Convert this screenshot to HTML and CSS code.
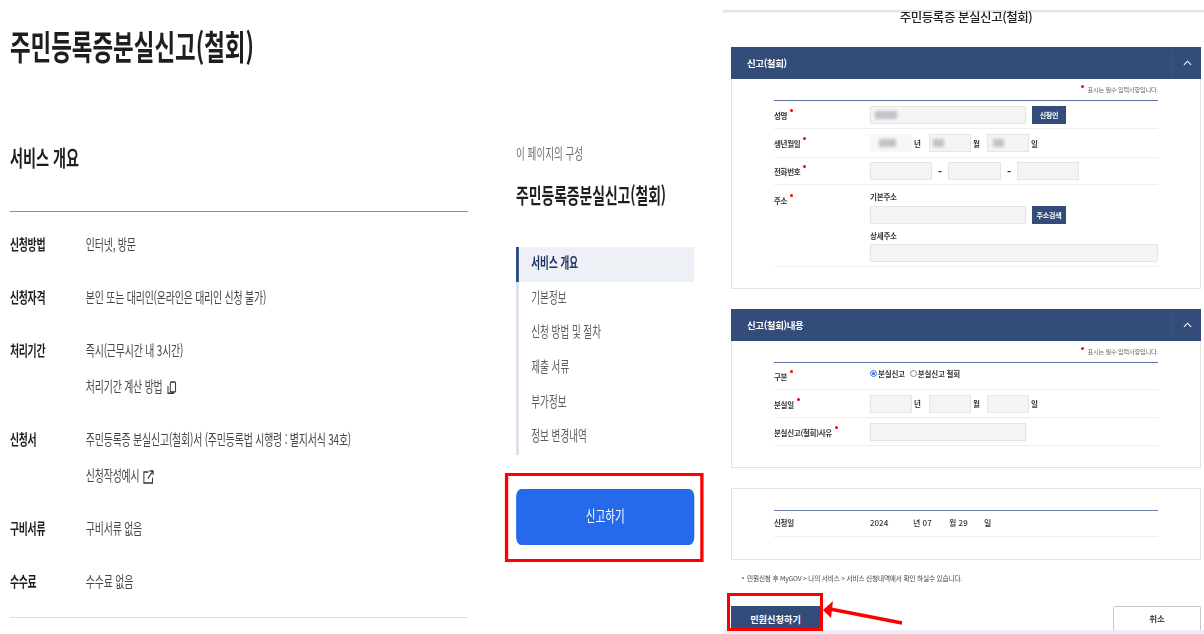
FILE: index.html
```html
<!DOCTYPE html>
<html lang="ko">
<head>
<meta charset="utf-8">
<title>주민등록증분실신고(철회)</title>
<link rel="stylesheet" href="styles.css">
</head>
<body>
<div class="page">
  <div class="info-frame">
    <div class="info">
      <main class="overview">
        <h1>주민등록증분실신고(철회)</h1>
        <h2>서비스 개요</h2>
        <dl class="facts">
          <div class="fact"><dt>신청방법</dt><dd><p>인터넷, 방문</p></dd></div>
          <div class="fact"><dt>신청자격</dt><dd><p>본인 또는 대리인(온라인은 대리인 신청 불가)</p></dd></div>
          <div class="fact"><dt>처리기간</dt><dd><p>즉시(근무시간 내 3시간)</p>
            <p>처리기간 계산 방법
              <svg class="icon" viewBox="0 0 18 14" width="18" height="14" fill="none" stroke="#333" stroke-width="1.5"><rect x="7" y="1" width="8" height="10" rx="1.5"/><path d="M3.5 5v7.2h9"/></svg>
            </p></dd></div>
          <div class="fact"><dt>신청서</dt><dd><p>주민등록증 분실신고(철회)서 (주민등록법 시행령 : 별지서식 34호)</p>
            <p>신청작성예시
              <svg class="icon" viewBox="0 0 18 14" width="18" height="14" fill="none" stroke="#333" stroke-width="1.5"><path d="M9 2H2v11h13V7.5M8 8.5 16 1M10.5 1H16v4"/></svg>
            </p></dd></div>
          <div class="fact"><dt>구비서류</dt><dd><p>구비서류 없음</p></dd></div>
          <div class="fact"><dt>수수료</dt><dd><p>수수료 없음</p></dd></div>
        </dl>
      </main>
      <aside class="toc">
        <p class="toc-kicker">이 페이지의 구성</p>
        <p class="toc-title">주민등록증분실신고(철회)</p>
        <ul class="toc-list">
          <li class="current">서비스 개요</li>
          <li>기본정보</li>
          <li>신청 방법 및 절차</li>
          <li>제출 서류</li>
          <li>부가정보</li>
          <li>정보 변경내역</li>
        </ul>
        <div class="mark-box"><button class="report">신고하기</button></div>
      </aside>
    </div>
  </div>

  <section class="form-shot">
    <h3 class="form-title">주민등록증 분실신고(철회)</h3>

    <div class="panel panel-a">
      <div class="panel-head"><span>신고(철회)</span><i class="fold"><svg viewBox="0 0 10 6" width="9" height="6" fill="none" stroke="#fff" stroke-width="1.2"><path d="M1 5l4-4 4 4"/></svg></i></div>
      <div class="panel-body">
        <p class="req-note"><b class="dot"></b>표시는 필수 입력사항입니다.</p>
        <div class="row r28"><span class="label req">성명</span><div class="cells"><span class="field w156"><i class="smudge s1"></i></span><span class="btn-mini">신청인</span></div></div>
        <div class="row r29"><span class="label req">생년월일</span><div class="cells"><span class="field w42 plain"><i class="smudge s2"></i></span><span class="unit u-y">년</span><span class="field w42"><i class="smudge s3"></i></span><span class="unit u-m">월</span><span class="field w42"><i class="smudge s4"></i></span><span class="unit">일</span></div></div>
        <div class="row r27"><span class="label req">전화번호</span><div class="cells"><span class="field w62"></span><span class="dash">-</span><span class="field w53"></span><span class="dash">-</span><span class="field w62"></span></div></div>
        <div class="row addr"><span class="label req">주소</span>
          <div class="stack">
            <span class="sub">기본주소</span>
            <div class="cells"><span class="field w156"></span><span class="btn-mini">주소검색</span></div>
            <span class="sub">상세주소</span>
            <span class="field full"></span>
          </div>
        </div>
      </div>
    </div>

    <div class="panel panel-b">
      <div class="panel-head"><span>신고(철회)내용</span><i class="fold"><svg viewBox="0 0 10 6" width="9" height="6" fill="none" stroke="#fff" stroke-width="1.2"><path d="M1 5l4-4 4 4"/></svg></i></div>
      <div class="panel-body">
        <p class="req-note"><b class="dot"></b>표시는 필수 입력사항입니다.</p>
        <div class="row r27"><span class="label req">구분</span><div class="cells radios"><i class="radio on"></i><span>분실신고</span><i class="radio"></i><span>분실신고 철회</span></div></div>
        <div class="row r28"><span class="label req">분실일</span><div class="cells"><span class="field w42"></span><span class="unit u-y">년</span><span class="field w42"></span><span class="unit u-m">월</span><span class="field w42"></span><span class="unit">일</span></div></div>
        <div class="row r28"><span class="label req">분실신고(철회)사유</span><div class="cells"><span class="field w156"></span></div></div>
      </div>
    </div>

    <div class="panel panel-c">
      <div class="panel-body">
        <div class="row r27 first"><span class="label">신청일</span><div class="cells date"><span class="d1">2024</span><span class="d2">년 07</span><span class="d3">월 29</span><span>일</span></div></div>
      </div>
    </div>

    <p class="foot-note">민원신청 후 MyGOV &gt; 나의 서비스 &gt; 서비스 신청내역에서 확인 하실수 있습니다.</p>

    <div class="actions">
      <div class="mark-submit"><button class="submit">민원신청하기</button></div>
      <button class="cancel">취소</button>
    </div>
  </section>
</div>
<svg class="arrow" viewBox="0 0 90 30" width="90" height="30"><path d="M80 23 8 9" stroke="#f00" stroke-width="3.5" fill="none"/><path d="M1 10 11 1 9 18z" fill="#f00"/></svg>
</body>
</html>
```

FILE: styles.css
```css
* { box-sizing: border-box; }
html, body { margin: 0; padding: 0; background: #fff; }
body {
  width: 1204px;
  height: 634px;
  overflow: hidden;
  position: relative;
  font-family: "Noto Sans CJK KR", "Noto Sans", sans-serif;
  color: #1e1e1e;
}
h1, h2, h3, p, dl, dd, ul { margin: 0; padding: 0; }
ul { list-style: none; }
button { font-family: inherit; cursor: pointer; }
i { font-style: normal; display: block; }

.page { display: flex; height: 634px; filter: blur(0.4px); }

/* The left part of the screenshot is horizontally compressed */
.info-frame { flex: 0 0 723px; overflow: hidden; }
.info {
  display: flex;
  width: 1095px;
  transform: scaleX(0.66);
  transform-origin: left top;
  padding-left: 15px;
}
.overview { width: 694px; flex: none; }
h1 {
  font-size: 34px;
  line-height: 46px;
  margin-top: 23px;
  font-weight: 700;
  letter-spacing: 0;
  color: #1e1e1e;
}
h2 {
  font-size: 21.5px;
  line-height: 28px;
  margin-top: 74px;
  font-weight: 700;
  padding-bottom: 40px;
  border-bottom: 1px solid #8f8f8f;
}
.facts { padding: 14px 0 18px; border-bottom: 1px solid #dcdcdc; }
.fact { display: flex; }
.fact + .fact { margin-top: 17px; }
dt { width: 115px; flex: none; font-size: 15px; line-height: 36px; font-weight: 700; letter-spacing: -0.4px; }
dd p { font-size: 15px; line-height: 36px; color: #464646; letter-spacing: -0.25px; }
.icon { vertical-align: -3px; margin-left: 1px; }

.toc { width: 270px; flex: none; margin-left: 73px; padding-top: 143px; }
.toc-kicker { font-size: 14.5px; line-height: 20px; color: #6f6f6f; }
.toc-title { font-size: 21px; line-height: 30px; font-weight: 700; margin-top: 16px; letter-spacing: -0.1px; }
.toc-list { margin-top: 38px; border-left: 4px solid #d8e0ea; }
.toc-list li { height: 34.7px; line-height: 30px; padding-left: 19px; font-size: 14.5px; color: #5c5c5c; }
.toc-list li.current {
  margin-left: -4px;
  padding-left: 19px;
  border-left: 4px solid #1c3f77;
  background: #edf0f5;
  color: #1c3460;
  font-weight: 700;
}
.mark-box {
  margin: 18px -14px 0 -17px;
  padding: 13px 9px 14px 12px;
  border: solid #f00;
  border-width: 3px 5px;
}
.report {
  display: block;
  width: 100%;
  height: 56px;
  border: 0;
  border-radius: 8px;
  background: #256aea;
  color: #fff;
  font-size: 16px;
  padding: 0 0 4px;
}

/* Right: the application form */
.form-shot { flex: 0 0 481px; padding: 0 3px 0 8px; position: relative; }
.form-shot::before {
  content: "";
  display: block;
  height: 4px;
  margin: 10px -3px 0 -8px;
  background: linear-gradient(#dcdcdc, #fff);
}
.form-title {
  margin-top: -5px;
  height: 15px;
  font-size: 12.5px;
  line-height: 15px;
  font-weight: 500;
  text-align: center;
  letter-spacing: -0.45px;
  color: #222;
}
.panel { border: 1px solid #e2e2e2; }
.panel-a { margin-top: 23px; height: 242px; }
.panel-b { margin-top: 20px; height: 159px; }
.panel-c { margin-top: 20px; height: 72px; }
.panel-head {
  display: flex;
  align-items: center;
  justify-content: space-between;
  height: 32px;
  margin: -1px -1px 0;
  padding: 0 0 0 16px;
  background: #344c79;
  color: #fff;
  font-size: 9.5px;
  font-weight: 700;
  letter-spacing: -0.4px;
}
.fold {
  display: flex;
  align-items: center;
  justify-content: center;
  width: 29px;
  height: 26px;
  border-left: 1px solid #3f5683;
}
.panel-body { padding: 0 42px; }
.req-note {
  display: flex;
  justify-content: flex-end;
  align-items: center;
  height: 22px;
  padding-bottom: 1px;
  border-bottom: 1px solid #5f73a0;
  font-size: 6.2px;
  color: #666;
  letter-spacing: -0.2px;
}
.dot { width: 3px; height: 3px; border-radius: 50%; background: #f00; margin: 0 3px 5px 0; }
.row {
  display: flex;
  align-items: center;
  border-bottom: 1px solid #eeeeee;
  font-size: 7.5px;
  font-weight: 700;
  color: #333;
}
.r27 { height: 27px; }
.r28 { height: 28px; }
.r29 { height: 29px; }
.addr { height: 82px; align-items: flex-start; padding-top: 9px; }
.first { margin-top: 21px; border-top: 1px solid #6f7fa6; height: 27px; }
.label { width: 96px; flex: none; letter-spacing: -0.3px; white-space: nowrap; }
.req::after {
  content: "";
  display: inline-block;
  width: 3px;
  height: 3px;
  margin-left: 3px;
  border-radius: 50%;
  background: #f00;
  vertical-align: 7px;
}
.cells { display: flex; align-items: center; }
.field {
  display: block;
  height: 18px;
  border: 1px solid #e5e5e5;
  background: #f4f4f4;
  position: relative;
  overflow: hidden;
}
.w156 { width: 156px; }
.w42 { width: 42px; }
.w62 { width: 62px; }
.w53 { width: 53px; }
.full { width: 288px; }
.plain { background: #f7f7f7; border-color: #f7f7f7; }
.smudge { position: absolute; top: 4px; height: 8px; background: #c2c2c8; filter: blur(1.5px); }
.s1 { left: 4px; width: 22px; }
.s2 { left: 8px; width: 17px; }
.s3 { left: 3px; width: 11px; }
.s4 { left: 5px; width: 11px; }
.unit { width: 17px; padding-left: 2px; }
.u-m { width: 16px; }
.dash { width: 16px; text-align: center; font-size: 11px; font-weight: 700; color: #222; }
.btn-mini {
  display: flex;
  align-items: center;
  justify-content: center;
  width: 34px;
  height: 18px;
  margin-left: 6px;
  background: #344c79;
  color: #fff;
  font-size: 7px;
  letter-spacing: -0.2px;
}
.stack { display: flex; flex-direction: column; align-items: flex-start; }
.sub { height: 12px; line-height: 8px; margin-top: -1px; letter-spacing: -0.2px; }
.sub + .cells { margin-top: 1px; }
.cells + .sub { margin-top: 8px; }
.sub + .field { margin-top: 0; }
.radios { font-size: 7.5px; margin-top: -5px; letter-spacing: -0.2px; }
.radio { width: 7px; height: 7px; border-radius: 50%; border: 1px solid #888; margin: 0 1px 0 5px; background: #fff; }
.radio.on { border: 1px solid #5b93e6; background: #2a6fd8; box-shadow: inset 0 0 0 1px #fff; margin-left: 0; }
.date span { font-weight: 500; }
.date { margin-top: -3px; font-size: 8px; }
.d1 { width: 43px; }
.d2 { width: 36px; }
.d3 { width: 35px; }
.first .label { margin-top: -3px; }
.foot-note {
  display: flex;
  align-items: center;
  gap: 3px;
  height: 12px;
  margin-top: 12px;
  padding-left: 11px;
  font-size: 6.7px;
  line-height: 12px;
  color: #444;
  letter-spacing: -0.2px;
  white-space: nowrap;
}
.foot-note::before {
  content: "";
  width: 2px;
  height: 2px;
  background: #999;
}
.actions {
  display: flex;
  justify-content: space-between;
  align-items: flex-end;
  height: 37px;
  margin: 10px 0 0 -4px;
  border-bottom: 0;
}
.mark-submit {
  width: 96px;
  height: 38px;
  padding: 10px 0 0 1px;
  border: 3px solid #f00;
  overflow: hidden;
  position: relative;
  z-index: 1;
}
.submit {
  display: block;
  width: 89px;
  height: 26px;
  border: 0;
  background: #344c79;
  color: #fff;
  font-size: 9.2px;
  font-weight: 700;
  padding: 0;
}
.cancel {
  width: 88px;
  height: 25px;
  border: 1px solid #c9c9c9;
  border-bottom: 0;
  border-radius: 2px 2px 0 0;
  background: #fff;
  color: #444;
  font-size: 8.5px;
  font-weight: 700;
  padding: 0 0 2px;
}
.form-shot::after {
  content: "";
  position: absolute;
  left: 0;
  right: 0;
  bottom: 0;
  height: 4px;
  background: #e9eff5;
}

/* Annotation arrow over the form */
.arrow { position: absolute; left: 822px; top: 600px; }
```
